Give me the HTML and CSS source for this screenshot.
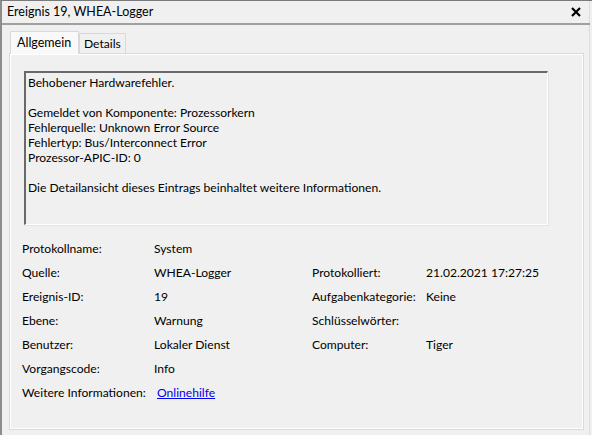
FILE: index.html
```html
<!DOCTYPE html>
<html lang="de">
<head>
<meta charset="utf-8">
<title>Ereignis 19, WHEA-Logger</title>
<link rel="stylesheet" href="styles.css">
</head>
<body>
<div class="frame">
<div class="window">
  <div class="titlebar">
    <span class="title">Ereignis 19, WHEA-Logger</span>
    <svg class="close" width="10" height="10" viewBox="0 0 10 10"><path d="M1 1 L9 9 M9 1 L1 9" stroke="#000" stroke-width="2.2"/></svg>
  </div>
  <div class="content">
    <div class="tabs">
      <div class="tab active">Allgemein</div>
      <div class="tab">Details</div>
    </div>
    <div class="panel">
      <div class="message">
        <p>Behobener Hardwarefehler.</p>
        <p>Gemeldet von Komponente: Prozessorkern<br>Fehlerquelle: Unknown Error Source<br>Fehlertyp: Bus/Interconnect Error<br>Prozessor-APIC-ID: 0</p>
        <p>Die Detailansicht dieses Eintrags beinhaltet weitere Informationen.</p>
      </div>
      <div class="fields">
        <span>Protokollname:</span><span>System</span><span></span><span></span>
        <span>Quelle:</span><span>WHEA-Logger</span><span>Protokolliert:</span><span>21.02.2021 17:27:25</span>
        <span>Ereignis-ID:</span><span>19</span><span>Aufgabenkategorie:</span><span>Keine</span>
        <span>Ebene:</span><span>Warnung</span><span>Schlüsselwörter:</span><span></span>
        <span>Benutzer:</span><span>Lokaler Dienst</span><span>Computer:</span><span>Tiger</span>
        <span>Vorgangscode:</span><span>Info</span><span></span><span></span>
        <span>Weitere Informationen:</span><span><a class="link" href="#">Onlinehilfe</a></span><span></span><span></span>
      </div>
    </div>
  </div>
</div>
</div>
</body>
</html>
```
FILE: styles.css
```css
* { box-sizing: border-box; }
html, body { margin: 0; padding: 0; }
body {
  background: #f0f0f0;
  font-family: Lato, "Noto Sans", sans-serif;
  font-size: 12.1px;
  color: #000;
}
.frame {
  width: 592px;
  height: 435px;
  border-top: 1px solid #7a7a7a;
  border-left: 2px solid #8c8c8c;
  overflow: hidden;
}
.window {
  width: 588px;
  height: 100%;
  border-right: 1px solid #dcdcdc;
  background: #f0f0f0;
}
.titlebar {
  height: 24px;
  display: flex;
  align-items: center;
  justify-content: space-between;
  padding: 0 9px 1px 5px;
  margin-right: -1px;
  border-bottom: 2px solid #a0a0a0;
}
.title { line-height: 16px; font-size: 12.5px; }
.close { display: block; }
.content {
  padding: 6px 0 0 7px;
}
.tabs {
  display: flex;
  align-items: flex-end;
  height: 22px;
  position: relative;
  z-index: 1;
}
.tab {
  height: 20px;
  padding: 0 4px;
  line-height: 19px;
  border: 1px solid #d9d9d9;
  border-bottom: none;
  background: #f0f0f0;
}
.tab.active {
  height: 23px;
  width: 69px;
  padding: 0 6px;
  line-height: 21px;
  background: #f9f9f9;
  border-color: #d9d9d9;
  margin: 0 0 -1px 1px;
  font-size: 12.5px;
}
.panel {
  height: 377px;
  width: 575px;
  border: 1px solid #d9d9d9;
  background: #f0f0f0;
  box-shadow: inset 1px 1px 0 #ffffff, inset -1px -1px 0 #ffffff;
  padding: 17px 0 0 14px;
}
.message {
  width: 524px;
  height: 154px;
  border-top: 2px solid #696969;
  border-left: 2px solid #696969;
  border-right: 1px solid #ffffff;
  border-bottom: 1px solid #ffffff;
  box-shadow: 1px 1px 0 #e3e3e3;
  padding: 2px 0 0 2px;
  line-height: 15px;
}
.message p { margin: 0 0 15px 0; }
.fields {
  display: grid;
  grid-template-columns: 132px 158px 114px 1fr;
  grid-auto-rows: 24px;
  align-items: center;
  margin: 11px 0 0 -2px;
}
.link {
  color: #0000ee;
  text-decoration: underline;
  margin-left: 3px;
}
```
